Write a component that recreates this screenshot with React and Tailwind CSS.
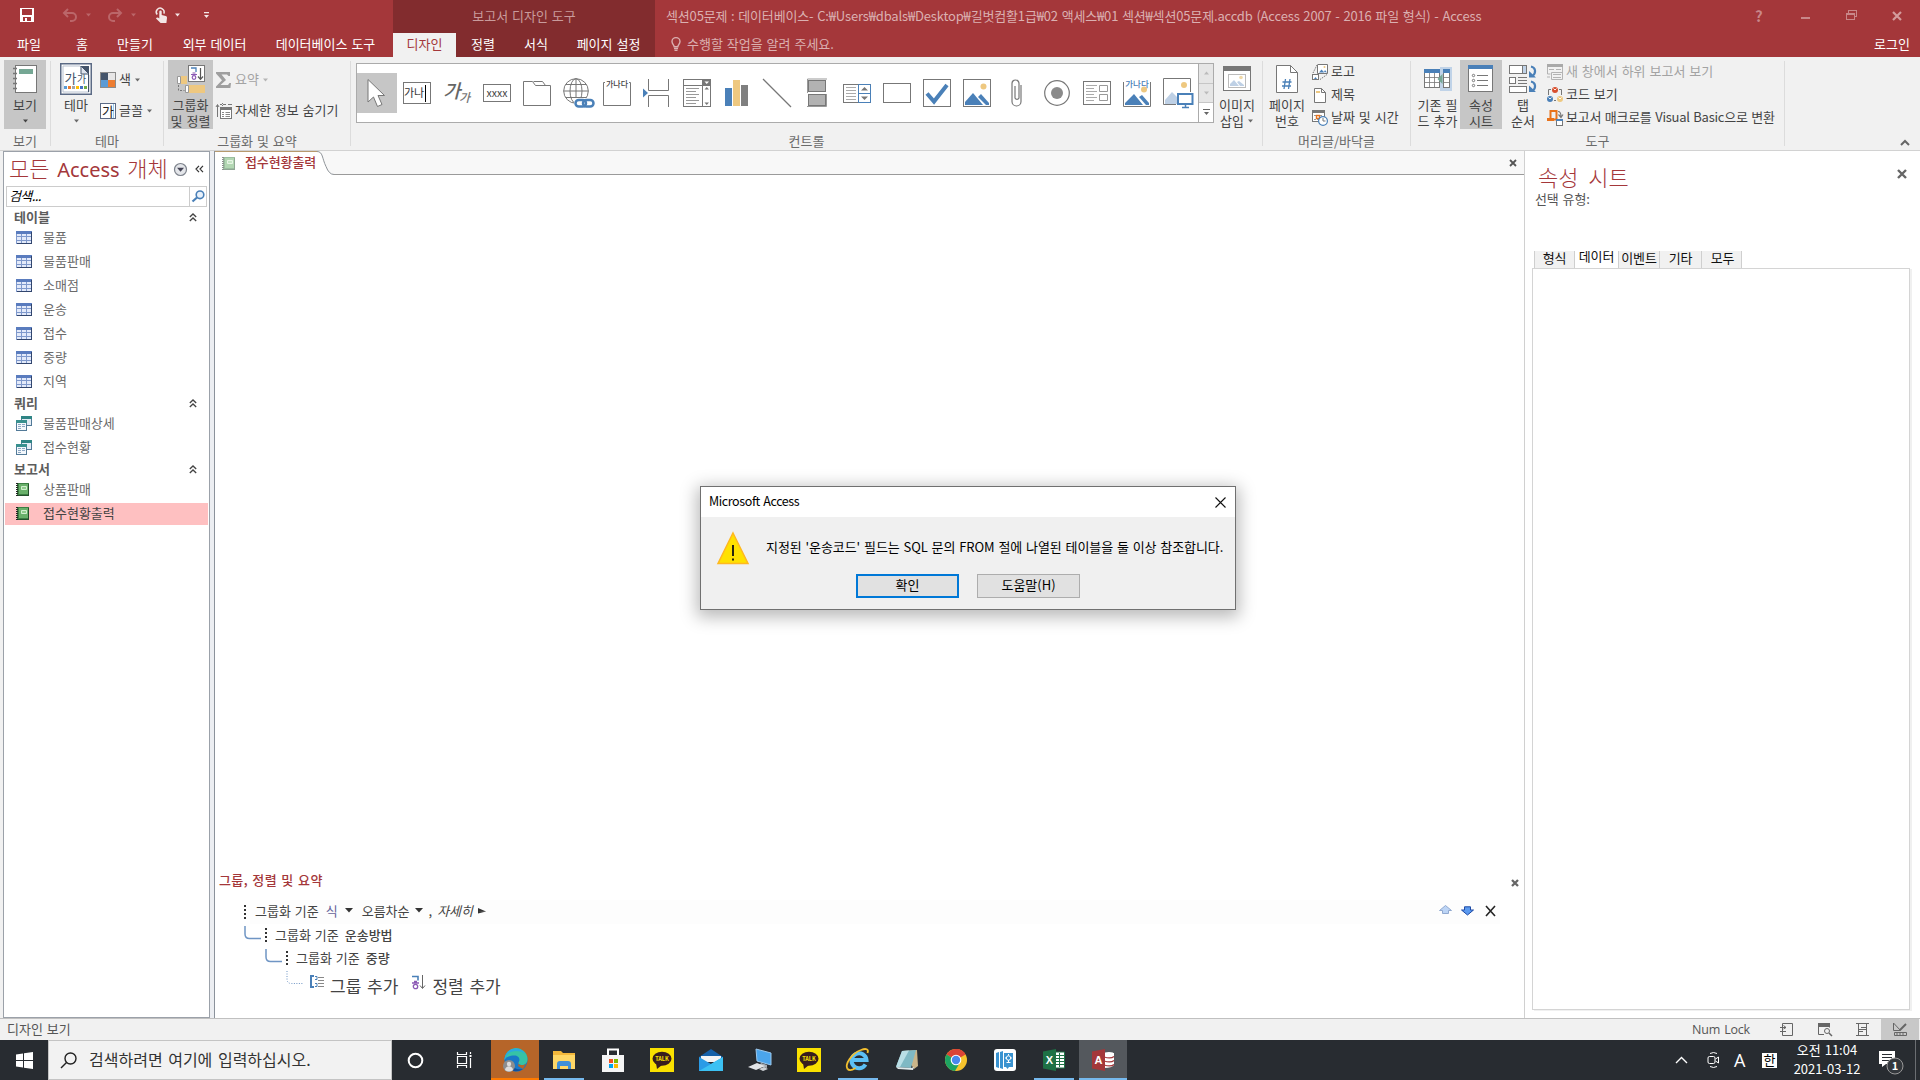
import React from "react";

const S = ({ w, h = w, children, className = "", crisp = false }) => (
  <svg width={w} height={h} viewBox={`0 0 ${w} ${h}`} fill="none" className={`block shrink-0 overflow-visible ${className}`} shapeRendering={crisp ? "crispEdges" : undefined}>
    {children}
  </svg>
);

const Caret = ({ c = "#6a6a6a", className = "" }) => (
  <S w={7} h={4} className={className}><path d="M1 0.5h5L3.5 3.5z" fill={c} /></S>
);

/* ---------- title bar ---------- */

const W = "#f3e6e6";
const DIM = "#bb6669";

function TitleBar() {
  return (
    <header className="flex h-[57px] bg-[#a4373a] text-white">
      <div className="w-[393px]">
        <div className="flex h-[33px] items-center pb-[3px] pl-[20px]">
          <S w={14} crisp><path d="M0 0h14v14H0z" fill="#fff" /><path d="M3 1h9v6H2V1z M3 9h8v4H3z" fill="#a4373a" /><path d="M5 10h2v3H5z" fill="#fff" /></S>
          <S w={16} h={14} className="ml-[28px]"><path d="M2 5h8a4 4 0 0 1 0 8H8M6 1L2 5l4 4" stroke={DIM} strokeWidth="2" /></S>
          <Caret c={DIM} className="ml-[7px]" />
          <S w={16} h={14} className="ml-[15px]"><path d="M14 5H6a4 4 0 0 0 0 8h2M10 1l4 4-4 4" stroke={DIM} strokeWidth="2" /></S>
          <Caret c={DIM} className="ml-[7px]" />
          <S w={13} h={17} className="ml-[18px]">
            <path d="M2.2 7.6A3.9 3.9 0 1 1 8.8 6.6" stroke={W} strokeWidth="1.5" />
            <path d="M4.3 4.6a1.2 1.2 0 0 1 2.4 0V8l4 1c1 .3 1.4 1 1.3 2L11.4 16H5.6L1 11.4c.6-1.2 2-1 3.3 0z" fill={W} />
          </S>
          <Caret c={W} className="ml-[6px]" />
          <S w={7} h={7} className="ml-[22px]"><path d="M1 0h5v1.2H1z M1 3h5L3.5 6z" fill={W} /></S>
        </div>
        <nav className="flex h-[24px] text-center text-[13px] leading-[21px]">
          <span className="w-[58px]">파일</span>
          <span className="w-[48px]">홈</span>
          <span className="w-[58px]">만들기</span>
          <span className="w-[101px]">외부 데이터</span>
          <span className="w-[121px]">데이터베이스 도구</span>
        </nav>
      </div>
      <div className="w-[262px] bg-[#822c2e]">
        <div className="h-[33px] text-center text-[13px] leading-[32px] text-[#c99b9c]">보고서 디자인 도구</div>
        <nav className="flex h-[24px] text-center text-[13px] leading-[21px]">
          <span className="w-[63px] bg-[#f1f1f1] text-[#a4373a]">디자인</span>
          <span className="w-[54px]">정렬</span>
          <span className="w-[52px]">서식</span>
          <span className="w-[93px]">페이지 설정</span>
        </nav>
      </div>
      <div className="flex-1 pl-[11px] text-[13px] text-[#dbb0b1]">
        <div className="flex h-[33px] justify-between leading-[32px]">
          <span className="whitespace-pre tracking-[-0.16px]">섹션05문제 : 데이터베이스- C:₩Users₩dbals₩Desktop₩길벗컴활1급₩02 액세스₩01 섹션₩섹션05문제.accdb (Access 2007 - 2016 파일 형식) - Access</span>
          <div className="flex items-center pb-[2px] pr-[18px] text-[#c98789]">
            <span className="w-[8px] text-[15px] font-bold">?</span>
            <S w={9} h={12} className="ml-[38px]" crisp><path d="M0 7h9v2H0z" fill="#c98789" /></S>
            <S w={11} h={11} className="ml-[36px]" crisp><path d="M.5 3.5h8v6h-8z M2.5 3V.5h8v6H9 M1 4.5h8" stroke="#c98789" /></S>
            <S w={10} className="ml-[35px]"><path d="M1 1l8 8M9 1L1 9" stroke="#d49c9d" strokeWidth="2.2" /></S>
          </div>
        </div>
        <div className="flex h-[24px] leading-[21px]">
          <S w={10} h={14} className="ml-[5px] mt-[4px]"><path d="M3.2 9.8C3 8 1 7 1 4.6a4 4 0 0 1 8 0C9 7 7 8 6.8 9.8z" stroke="#dbb0b1" strokeWidth="1.4" /><path d="M3 11.5h4M3.5 13.3h3" stroke="#dbb0b1" strokeWidth="1.3" /></S>
          <span className="ml-[6px]">수행할 작업을 알려 주세요.</span>
          <span className="ml-auto mr-[10px] text-white">로그인</span>
        </div>
      </div>
    </header>
  );
}

/* ---------- ribbon ---------- */

function Group({ className, caption, children }) {
  return (
    <div className={`flex shrink-0 ${className}`}>
      <div className="flex flex-1 flex-col">
        <div className="flex h-[72px] pt-[3px]">{children}</div>
        <div className="text-center leading-[23px] text-[#6a6a6a]">{caption}</div>
      </div>
      <div className="mt-[4px] h-[85px] w-px bg-[#dcdcdc]" />
    </div>
  );
}

function Big({ className, icon, l1, l2, on }) {
  return (
    <div className={`h-[69px] shrink-0 text-center leading-[16px] ${on ? "bg-[#c6c6c6]" : ""} ${className}`}>
      <div className="flex h-[37px] items-center justify-center">{icon}</div>
      <div className="whitespace-nowrap">{l1}</div>
      <div className="flex h-[16px] items-center justify-center whitespace-nowrap">{l2}</div>
    </div>
  );
}

function Small({ icon, children, className = "h-[23px]", off, caret }) {
  return (
    <div className={`flex items-center whitespace-nowrap ${off ? "text-[#a3a3a3]" : ""} ${className}`}>
      <div className="flex w-[19px] shrink-0">{icon}</div>
      <span className="pb-[2px]">{children}</span>
      {caret && <Caret c={off ? "#b5b5b5" : "#6a6a6a"} className="ml-[3px]" />}
    </div>
  );
}

const G = "#777";
const B = "#4a80b8";
const Y = "#eec880";

const ReportIcon = (
  <S w={24} h={28}>
    <rect x="2.5" y=".5" width="21" height="27" fill="#fff" stroke={G} />
    <path d="M6 4h14v5H6z" fill="#75a794" />
    <path d="M0 3.5h4M0 8.5h4M0 13.5h4M0 18.5h4M0 23.5h4" stroke={G} strokeWidth="1.5" />
  </S>
);

const ThemeIcon = (
  <S w={32}>
    <rect x=".75" y=".75" width="30.5" height="30.5" fill="#fff" stroke="#5b6a85" strokeWidth="1.5" />
    <path d="M3 3h17l9 9v17H3z" fill="#fff" stroke="#b9c2d0" />
    <path d="M28 11h1v18h-1z" fill="#44546a" />
    <path d="M21 3h8v8z" fill="#44546a" />
    <path d="M21 3l8 8h-8z" fill="#dfe5ee" stroke="#44546a" />
    <text x="4.5" y="20" fontSize="13" fill="#44546a">가</text>
    <text x="17" y="20" fontSize="10" fill="#44546a">가</text>
    <path d="M4 23h3v3H4z" fill="#5b9bd5" /><path d="M8 23h3v3H8z" fill="#ed7d31" /><path d="M12 23h3v3h-3z" fill="#a5a5a5" />
    <path d="M16 23h3v3h-3z" fill="#ffc000" /><path d="M20 23h3v3h-3z" fill="#4472c4" /><path d="M24 23h3v3h-3z" fill="#70ad47" />
  </S>
);

const ColorIcon = (
  <S w={16} crisp><path d="M0 0h16v16H0z" fill="#8b8b8b" /><path d="M1 1h7v7H1z" fill="#44546a" /><path d="M8 1h7v7H8z" fill="#e7e6e6" /><path d="M1 8h7v7H1z" fill="#5b9bd5" /><path d="M8 8h7v7H8z" fill="#ed7d31" /></S>
);

const FontIcon = (
  <S w={16}><rect x=".5" y=".5" width="15" height="15" fill="#fff" stroke="#5b6a85" /><path d="M13.5 1v14" stroke="#9cc6ea" /><text x="2" y="12.5" fontSize="13" fill="#222">가</text></S>
);

const SortIcon = (
  <S w={28}>
    <path d="M4 11h6v8H4zM11 20h17v8H11z" fill={Y} />
    <path d="M.5 11.5h3v7h-3zM8.5 20.5h3v7h-3z" fill="#fff" stroke="#999" />
    <path d="M1.5 20v5.5h6" stroke="#777" strokeDasharray="2 1.5" />
    <rect x="11.5" y=".5" width="16" height="16" fill="#fff" stroke={G} />
    <path d="M14 3h5v4" stroke={B} strokeWidth="1.3" />
    <path d="M14 9.5h6M15.5 8h3" stroke="#8c59b5" strokeWidth="1.2" /><circle cx="17" cy="12.5" r="1.8" stroke="#8c59b5" strokeWidth="1.2" />
    <path d="M23.5 3v11M21 11.5l2.5 2.8 2.5-2.8" stroke="#555" strokeWidth="1.2" />
  </S>
);

const SigmaIcon = <S w={16}><path d="M0 0h14v4h-1.5L11 2.5H5.5L10 8l-5.5 5H12l1.5-2H15l-.6 5H0v-1.500L6 8.300 0 1.500z" fill="#9f9f9f" /></S>;

const DetailIcon = (
  <S w={16}><path d="M1.5 2v12M0 4l1.5-2.5L3 4M4 1.5h2M7 1.5h3M12 1.5h4M7 0L5.5 1.5 7 3" stroke="#777" /><rect x="4.5" y="4.5" width="11" height="11" fill="#fff" stroke={G} /><path d="M4 4h12v3H4z" fill={G} /><path d="M6 9.5h2M9.5 9.5h4.5M6 11.5h2M9.5 11.5h4.5M6 13.5h2M9.5 13.5h4.5" stroke="#888" /></S>
);

const PicMini = ({ faded }) => (
  <g>
    <circle cx="20.5" cy="7.5" r="3" fill={faded ? "#f0d9a8" : Y} />
    <path d="M2 26v-3l8-9 10 12z" fill={faded ? "#bed0e5" : B} />
    <path d="M15 18l3-3 8 9v2h-3z" fill={faded ? "#bed0e5" : B} />
  </g>
);

const galleryIcons = [
  <S w={20} h={30}><path d="M1 1.5v22.5l5.5-5 4 9.5 4.5-2-4-9h6.5z" fill="#fff" stroke={G} strokeLinejoin="round" /></S>,
  <S w={28} h={22}><rect x=".5" y=".5" width="27" height="21" fill="#fff" stroke={G} /><text x="1" y="15" fontSize="11" fill="#333">가나</text><path d="M22.5 3v17" stroke="#000" /></S>,
  <S w={30} h={24}><text x="1" y="17" fontSize="19" fontStyle="italic" fontWeight="500" fill="#666">가</text><text x="17" y="21" fontSize="12" fontStyle="italic" fontWeight="500" fill="#777">가</text></S>,
  <S w={28} h={18}><rect x=".5" y=".5" width="27" height="17" fill="#fff" stroke={G} /><text x="14" y="12.5" textAnchor="middle" fontSize="10.5" fill="#444">xxxx</text></S>,
  <S w={28} h={26}><path d="M.5 1.5h9l3 4h15v20H.5zM10.5 1.5h9l3 4" fill="#fff" stroke={G} /></S>,
  <S w={32} h={30} className="ml-[4px]"><g stroke={G} fill="none"><circle cx="13" cy="13" r="12.3" /><ellipse cx="13" cy="13" rx="6" ry="12.3" /><path d="M.7 13h24.6M13 .7v24.6M2.5 6.5h21M2.5 19.5h21" /></g><path d="M11 20h21v10H11z" fill="#fff" /><rect x="12.5" y="22" width="10.5" height="6.5" rx="3.25" stroke={B} strokeWidth="2.5" /><rect x="20" y="22" width="10.5" height="6.5" rx="3.25" stroke={B} strokeWidth="2.5" /></S>,
  <S w={28} h={28}><path d="M2 3.5H.5v23h27v-23H26" stroke={G} /><text x="14" y="8" textAnchor="middle" fontSize="8" fontWeight="500" fill="#444">가나다</text></S>,
  <S w={26} h={28} className="mr-[2px]"><path d="M5.5 0v11.5h20V0M5.5 28V16.5h20V28" stroke={G} /><path d="M0 9.5l5 4.5-5 4.5z" fill={B} /></S>,
  <S w={28} h={28}><rect x=".5" y=".5" width="27" height="27" fill="#fff" stroke={G} /><path d="M0 6.5h28M19.5 0v28" stroke={G} /><path d="M20 1h7v5h-7z" fill={G} /><path d="M21.5 2.5h4.5L23.75 5z" fill="#fff" /><path d="M21.5 10.5h4.5L23.75 8zM21.5 23.5h4.5L23.75 26z" fill={G} /><path d="M3 9.5h13M3 12.5h10M3 15.5h13M3 18.5h10M3 21.5h13M3 24.5h10" stroke="#999" /></S>,
  <S w={24} h={26} crisp><path d="M0 8h7v18H0z" fill={B} /><path d="M8 0h7v26H8z" fill={Y} /><path d="M16 5h7v21h-7z" fill="#7f7f7f" /></S>,
  <S w={28} h={28}><path d="M0 0l28 28" stroke={G} strokeWidth="1.2" /></S>,
  <S w={20} h={28}><rect x="1.5" y="1.5" width="17" height="11" fill="#b2b2b2" stroke="#777" /><path d="M.5 14V0H20" stroke="#999" /><rect x="1.5" y="15.5" width="17" height="11" fill="#b2b2b2" stroke="#777" /><path d="M0 27.5h19.5V15" stroke="#999" /></S>,
  <S w={28} h={19}><rect x=".5" y=".5" width="27" height="18" fill="#fff" stroke={G} /><path d="M3 3.5h10M3 6.5h10M3 9.5h10M3 12.5h10M3 15.5h10" stroke="#aaa" /><path d="M15.5.5h12v18h-12zM15 9.5h13" stroke={B} /><path d="M18 6.5h7L21.5 3zM18 12.5h7L21.5 16z" fill={G} /></S>,
  <S w={28} h={20}><rect x=".5" y=".5" width="27" height="19" fill="#fff" stroke={G} /></S>,
  <S w={28} h={28}><rect x=".5" y=".5" width="27" height="27" fill="#fff" stroke={G} /><path d="M4 14.5l7 8L24 6" stroke={B} strokeWidth="4" /></S>,
  <S w={28} h={28}><rect x=".5" y=".5" width="27" height="27" fill="#fff" stroke={G} /><PicMini /></S>,
  <S w={12} h={28} className="mr-[1px]"><path d="M1 8v14.5a4.5 4.5 0 0 0 9 0V6M1 8V4.5a3.5 3.5 0 0 1 7 0V19a2.2 2.2 0 0 1-4 0V7" stroke={G} strokeWidth="1.2" /></S>,
  <S w={26} h={26}><circle cx="13" cy="13" r="12.3" fill="#fff" stroke={G} strokeWidth="1.2" /><circle cx="13" cy="13" r="6" fill="#8a8a8a" /></S>,
  <S w={28} h={24}><rect x=".5" y=".5" width="27" height="23" fill="#fff" stroke={G} /><path d="M3 4.5h11M3 7.5h8M3 10.5h11M3 13.5h8M3 16.5h11M3 19.5h8" stroke="#aaa" /><path d="M16.5 4.5h8v6h-8zM16.5 13.5h8v6h-8z" stroke="#999" /></S>,
  <S w={28} h={28}><path d="M.5 3v24.5h27V3" stroke={G} /><circle cx="21" cy="10.5" r="3" fill={Y} /><path d="M2 26v-2l9-9 9 11zM16 18l3-2 7 8v2h-3z" fill={B} /><text x="14" y="7.5" textAnchor="middle" fontSize="8.5" fontWeight="500" fill={B}>가나다</text></S>,
  <S w={31} h={30} className="ml-[3px]"><path d="M13 26.5H.5V.5h27V14" stroke={G} /><circle cx="21" cy="7" r="3" fill={Y} /><path d="M2 26v-4l7-8 6 6v6z" fill="#bed0e5" /><rect x="15" y="16" width="14.5" height="10" fill="#fff" stroke={B} strokeWidth="2" /><path d="M19 29.5h7M22.5 27v2" stroke={B} strokeWidth="1.5" /></S>,
];

const InsertPicIcon = (
  <S w={28} h={25}><rect x=".5" y=".5" width="27" height="24" fill="#fff" stroke={G} /><path d="M0 0h28v5H0z" fill={G} /><rect x="5.5" y="8.5" width="17" height="13" fill="#fff" stroke="#bbb" /><path d="M7 20v-2l4-4 5 6zM14 16l2-1 5 4v1h-4z" fill="#bed0e5" /><circle cx="18" cy="11.5" r="1.8" fill="#f0d9a8" /></S>
);
const PageNoIcon = (
  <S w={22} h={28}><path d="M.5.5h14l7 7v20H.5z" fill="#fff" stroke={G} /><path d="M14.5.5v7h7" stroke={G} /><path d="M8 24l1.5-10M12.500 24l1.500-10M6.500 17h9M6 21h9" stroke={B} strokeWidth="1.300" /></S>
);
const LogoIcon = (
  <S w={16}><path d="M5.5 1v8.5h10V.5h-10" fill="#fff" stroke={G} /><path d="M7 8.5l2.5-3 3 3zM12 8l1-2 2 2.5z" fill={B} /><circle cx="12.5" cy="3" r="1" fill={Y} /><rect x=".5" y="10.5" width="6" height="5" fill="#fff" stroke={G} /><path d="M2 15l1.5-2L5 15z" fill={B} /><path d="M1 9l4-8M8 15.5l7-5" stroke={G} strokeDasharray="1.5 1" /></S>
);
const TitleIcon = <S w={16}><path d="M2.5 1.5h7l4 4v10h-11z" fill="#fff" stroke={G} /><path d="M9.5 1.5v4h4" stroke={G} /><path d="M4 4h4v2H4z" fill={Y} /></S>;
const DateIcon = (
  <S w={16}><rect x=".5" y=".5" width="12" height="11" fill="#fff" stroke={G} /><path d="M0 0h13v3H0z" fill={G} /><path d="M2 5.5h9M2 9.5h6" stroke="#999" strokeDasharray="2 1" /><rect x="4.5" y="5.5" width="3" height="3" stroke="#e8731c" strokeWidth="1.4" /><circle cx="11" cy="11" r="4.4" fill="#fff" stroke={B} strokeWidth="1.2" /><path d="M11 8v3h2.5" stroke={G} /></S>
);
const AddFieldIcon = (
  <S w={28} h={24}><path d="M16 0h12v24H16z" fill="#c0d3e8" /><rect x=".5" y="2.5" width="15" height="18" fill="#fff" stroke={G} /><rect x="19.5" y="2.5" width="6" height="18" fill="#fff" stroke={G} /><path d="M0 2h16v4H0zM19 2h7v4h-7z" fill={B} /><path d="M0 10.5h16M0 15.5h16M5.5 6v15M10.5 6v15M19 10.5h7M19 15.5h7" stroke={G} strokeWidth=".8" /><path d="M18.5 7v10L13.5 12z" fill="#75a794" /></S>
);
const PropIcon = (
  <S w={26} h={28}><rect x=".5" y=".5" width="24" height="26" fill="#fff" stroke={G} /><path d="M0 0h25v4H0z" fill={B} /><path d="M9 10.5h11M9 15.5h11M9 20.5h11" stroke={G} /><g stroke={G}><circle cx="5.5" cy="10.5" r="1.2" /><circle cx="5.5" cy="15.5" r="1.2" /><circle cx="5.5" cy="20.5" r="1.2" /></g></S>
);
const TabOrderIcon = (
  <S w={28}><rect x=".5" y=".5" width="17" height="8" fill="#fff" stroke={G} /><path d="M14 1h3v7h-3z" fill="#c0d3e8" /><path d="M13.5 1v7" stroke={G} /><rect x=".5" y="12.5" width="6" height="6" fill="#fff" stroke={G} /><path d="M9 12.5h9M9 15.5h9M9 18.5h9" stroke={G} /><rect x=".5" y="21.5" width="17" height="6" fill="#fff" stroke={G} /><path d="M22 1.5c5 1 5 6.5 2 9M22 16.5c5 1 5 6.5 2 9" stroke={B} strokeWidth="2.2" /><path d="M20 6v6.5h7zM20 20.5V27h7z" fill={B} /></S>
);
const SubWinIcon = (
  <S w={16}><path d="M0 0h16v3H0z" fill="#a9a9a9" /><path d="M.5 3v7h3M15.5 3v12.5h-11v-7h11M2 5.5h5M9 5.5h5M6 10.5h8M6 13.5h8M0 13h3" stroke="#b3b3b3" /></S>
);
const CodeIcon = (
  <S w={16}><path d="M4 2.5H1.5V8M12 2.5h2.5V8M7 13.5h2" stroke={G} /><circle cx="8" cy="3" r="3" fill="#d8502f" /><circle cx="3" cy="12" r="3" fill={B} /><circle cx="13" cy="12" r="3" fill={Y} /><path d="M6.5 1.5L8 3l1.5-1.5M1.5 10.500L3 12l1.500-1.500M11.500 10.500L13 12l1.500-1.500" stroke="#fff" strokeWidth=".9" /></S>
);
const MacroIcon = (
  <S w={16}><path d="M3.5 9V1h7M9.5 1v8.5H1" stroke="#e8731c" strokeWidth="2" /><path d="M0 8h7v3H0z" fill="#e8731c" /><path d="M11 1.5c2.500 0 3 2 3 5M11.500 4.500L14 7.500 16 4.500" stroke={G} strokeWidth="1.200" /><rect x="9.500" y="9.500" width="6" height="6" fill="#fff" stroke={G} /><path d="M9 9h7v2H9z" fill={B} /></S>
);

function Ribbon() {
  return (
    <section className="flex h-[94px] border-b border-[#d2d2d2] bg-[#f1f1f1] text-[13px] text-[#444]">
      <Group className="w-[51px]" caption="보기">
        <Big className="ml-[4px] w-[42px]" on icon={ReportIcon} l1="보기" l2={<Caret c="#444" />} />
      </Group>
      <Group className="w-[113px]" caption="테마">
        <Big className="ml-[4px] w-[42px]" icon={ThemeIcon} l1="테마" l2={<Caret />} />
        <div className="ml-[3px] pt-[4px]">
          <Small className="h-[31px]" icon={ColorIcon} caret>색</Small>
          <Small className="h-[31px]" icon={FontIcon} caret>글꼴</Small>
        </div>
      </Group>
      <Group className="w-[187px]" caption="그룹화 및 요약">
        <Big className="ml-[4px] w-[45px]" on icon={SortIcon} l1="그룹화" l2="및 정렬" />
        <div className="ml-[3px] pt-[4px]">
          <Small className="h-[31px]" icon={SigmaIcon} off caret>요약</Small>
          <Small className="h-[31px]" icon={DetailIcon}>자세한 정보 숨기기</Small>
        </div>
      </Group>
      <Group className="w-[912px]" caption="컨트롤">
        <div className="ml-[5px] mt-[3px] flex h-[60px] w-[858px] border border-[#ababab] bg-white">
          <div className="flex flex-1 items-center">
            {galleryIcons.map((ic, i) => (
              <div key={i} className={`flex h-[40px] w-[40px] shrink-0 items-center justify-center ${i === 0 ? "bg-[#c6c6c6]" : ""}`}>{ic}</div>
            ))}
          </div>
          <div className="flex w-[15px] flex-col border-l border-[#ababab]">
            <div className="flex flex-1 items-center justify-center border-b border-[#c6c6c6] bg-[#e6e6e6]"><Caret c="#bbb" className="rotate-180" /></div>
            <div className="flex flex-1 items-center justify-center border-b border-[#c6c6c6] bg-[#e6e6e6]"><Caret c="#bbb" /></div>
            <div className="flex flex-1 items-center justify-center"><S w={7} h={7}><path d="M0 0h7v1H0zM1 3h5L3.5 6z" fill="#666" /></S></div>
          </div>
        </div>
        <Big className="ml-[2px] w-[42px]" icon={InsertPicIcon} l1="이미지" l2={<>삽입<Caret className="ml-[3px]" /></>} />
      </Group>
      <Group className="w-[148px]" caption="머리글/바닥글">
        <Big className="ml-[3px] w-[42px]" icon={PageNoIcon} l1="페이지" l2="번호" />
        <div className="ml-[4px]">
          <Small icon={LogoIcon}>로고</Small>
          <Small icon={TitleIcon}>제목</Small>
          <Small icon={DateIcon}>날짜 및 시간</Small>
        </div>
      </Group>
      <Group className="w-[374px]" caption="도구">
        <Big className="ml-[4px] w-[45px]" icon={AddFieldIcon} l1="기존 필" l2="드 추가" />
        <Big className="w-[42px]" on icon={PropIcon} l1="속성" l2="시트" />
        <Big className="w-[42px]" icon={TabOrderIcon} l1="탭" l2="순서" />
        <div className="ml-[3px]">
          <Small icon={SubWinIcon} off>새 창에서 하위 보고서 보기</Small>
          <Small icon={CodeIcon}>코드 보기</Small>
          <Small icon={MacroIcon}><span className="tracking-[-0.26px]">보고서 매크로를 Visual Basic으로 변환</span></Small>
        </div>
      </Group>
      <S w={10} h={7} className="ml-auto mr-[10px] mt-[82px]"><path d="M1 6l4-4 4 4" stroke="#666" strokeWidth="2" /></S>
    </section>
  );
}

/* ---------- navigation pane ---------- */

const TableIcon = (
  <S w={16} h={13} crisp><path d="M0 0h16v13H0z" fill="#7f99cc" /><path d="M0 0h16v3H0z" fill="#5a7cbe" /><path d="M1 3h4v2H1zM6 3h4v2H6zM11 3h4v2h-4zM1 6h4v3H1zM6 6h4v3H6zM11 6h4v3h-4zM1 10h4v2H1zM6 10h4v2H6zM11 10h4v2h-4z" fill="#e3eafa" /><path d="M15 1h1v12H1v-1h14z" fill="#32466e" /></S>
);
const QueryIcon = (
  <S w={16} h={15} crisp><path d="M5 0h11v10H5z" fill="#527a98" /><path d="M6 3h9v6H6z" fill="#e3ecf5" /><path d="M5 0h11v3H5z" fill="#2f8585" /><path d="M0 4h11v11H0z" fill="#527a98" /><path d="M1 7h9v7H1z" fill="#f4f8fc" /><path d="M0 4h11v3H0z" fill="#39908f" /><path d="M2 8h3v1H2zM6 8h3v1H6zM2 10h3v1H2zM6 10h3v1H6zM2 12h3v1H2z" fill="#8aa6c2" /></S>
);
const BookIcon = ({ faded }) => (
  <S w={13} h={13} className={faded ? "opacity-50" : ""}><path d="M1 0h12v13H1z" fill="#3c7f43" /><path d="M3 1h9v10H3z" fill="#69b06a" /><path d="M5.5 3.5h5v3h-5z" fill="#8fcb8c" stroke="#d2efcf" /><path d="M1 0v13" stroke="#222" strokeWidth="2" strokeDasharray="1 1" /><path d="M2 12.5h11M12.500 1v12" stroke="#24502c" /></S>
);
const UpUp = <S w={8} h={9}><path d="M.8 4L4 1l3.2 3M.8 8L4 5l3.2 3" stroke="#444" strokeWidth="1.3" /></S>;

function Section({ title, icon, items, selected }) {
  return (
    <>
      <div className="flex h-[18px] items-center justify-between pl-[9px] pr-[11px] pt-[2px] font-bold text-[#5c5c5c]">
        <span className="text-[13px] leading-[16px]">{title}</span>{UpUp}
      </div>
      {items.map((t) => (
        <div key={t} className="h-[24px] pt-[2px]">
          <div className={`flex h-[22px] items-center pl-[11px] ${t === selected ? "bg-[#fec0c1] text-[#444]" : "text-[#6a6a6a]"}`}>
            <div className="w-[27px] pb-[2px]">{icon}</div>
            <span className="pb-[2px]">{t}</span>
          </div>
        </div>
      ))}
    </>
  );
}

function NavPane() {
  return (
    <aside className="flex w-[215px] shrink-0 bg-[#f1f1f1] pl-[3px]">
      <div className="w-[207px] border border-[#9ba1a9] bg-white px-px text-[13px]">
        <div className="flex h-[34px] items-center pl-[4px] text-[#a4373a]">
          <span className="whitespace-nowrap font-[Noto_Sans,Noto_Sans_CJK_KR] text-[22px] font-light leading-[34px] [word-spacing:2px]">모든 <span className="text-[20px] font-normal">Access</span> 개체</span>
          <S w={13} className="ml-auto"><circle cx="6.5" cy="6.5" r="6" fill="#e4e6ea" stroke="#7d838c" strokeWidth="1.2" /><path d="M3 4.800h7L6.500 8.800z" fill="#445" /></S>
          <S w={9} h={8} className="ml-[8px] mr-[4px]"><path d="M4 .8L1 4l3 3.2M8 .8L5 4l3 3.200" stroke="#333" strokeWidth="1.200" /></S>
        </div>
        <div className="ml-px mr-px flex h-[21px] border border-[#ccc]">
          <span className="flex-1 pl-[2px] italic leading-[17px] tracking-[-0.6px] text-black">검색...</span>
          <div className="flex w-[17px] items-center justify-center border-l border-[#ccc]">
            <S w={14} h={13}><circle cx="9" cy="4.8" r="3.8" fill="#e8f1fb" stroke="#4a80b8" strokeWidth="1.6" /><path d="M6 7.5L1.5 11.5" stroke="#4a80b8" strokeWidth="2.2" /></S>
          </div>
        </div>
        <Section title="테이블" icon={TableIcon} items={["물품", "물품판매", "소매점", "운송", "접수", "중량", "지역"]} />
        <Section title="쿼리" icon={QueryIcon} items={["물품판매상세", "접수현황"]} />
        <Section title="보고서" icon={<BookIcon />} items={["상품판매", "접수현황출력"]} selected="접수현황출력" />
      </div>
      <div className="w-[5px] border-r border-[#8b929b] bg-[#eceef2]" />
    </aside>
  );
}

/* ---------- document area ---------- */

const Dots = () => <S w={2} h={14} crisp><path d="M0 0h2v2H0zM0 4h2v2H0zM0 8h2v2H0zM0 12h2v2H0z" fill="#333" /></S>;
const Link = ({ dotted }) => (
  <S w={18} h={14}><path d="M1 0v8q0 4.5 4.5 4.5H17" stroke="#6f95c4" strokeWidth={dotted ? 1 : 1.5} strokeDasharray={dotted ? "1 1.5" : undefined} /></S>
);
const XMark = ({ w = 8, c = "#555", s = 2 }) => <S w={w}><path d={`M1 1L${w - 1} ${w - 1}M${w - 1} 1L1 ${w - 1}`} stroke={c} strokeWidth={s} /></S>;
const Drop = ({ className = "" }) => <S w={8} h={5} className={className}><path d="M0 0h8L4 4.5z" fill="#333" /></S>;

function Document() {
  return (
    <main className="flex w-[1309px] shrink-0 flex-col bg-white text-[13px]">
      <div className="flex h-[24px] bg-[#f8f8f8]">
        <div className="flex h-[24px] w-[102px] items-center border-t border-[#b79a6e] bg-white pb-px pl-[7px] text-[#a4373a]">
          <BookIcon faded />
          <span className="ml-[10px] whitespace-nowrap pb-[2px] font-medium tracking-[-0.1px]">접수현황출력</span>
        </div>
        <S w={17} h={24}><path d="M0 0c6 0 5 8 9 16q3 8 7 8H0z" fill="#fff" /><path d="M0 .5c6 0 5 7 9 15q3 8 8 8" stroke="#8f9499" /></S>
        <div className="flex flex-1 items-center justify-end border-b border-[#9a9a9a] pr-[7px]"><XMark w={8} s={1.8} /></div>
      </div>
      <div className="h-[696px]" />
      <div className="flex h-[24px] items-start justify-between pl-[4px] pr-[5px]">
        <span className="font-medium leading-[18px] tracking-[0.4px] text-[#a4373a]">그룹, 정렬 및 요약</span>
        <div className="mt-[8px]"><XMark w={8} c="#666" s={2.3} /></div>
      </div>
      <div className="mt-[4px] flex h-[25px] items-center pl-[29px] text-[#444]">
        <Dots />
        <div className="ml-[4px] flex h-[24px] w-[1250px] items-center bg-[#fdfdfd] pb-[2px] pl-[5px]">
          <span>그룹화 기준</span><span className="ml-[7px] text-[#66629a]">식</span>
          <Drop className="ml-[7px]" />
          <span className="ml-[9px]">오름차순</span>
          <Drop className="ml-[5px]" />
          <span className="ml-[6px]">,</span>
          <span className="ml-[5px] italic">자세히</span>
          <S w={8} h={6} className="ml-[5px]"><path d="M0 0l8 3.5H0z" fill="#333" /><path d="M0 3l8 .5L0 5.500z" fill="#333" /></S>
          <div className="ml-auto mr-[4px] flex items-center">
            <S w={13} h={9} className="mb-[3px]"><path d="M6.5.5l6 5h-3v3h-6v-3h-3z" fill="#bcd4f5" stroke="#91a9d0" /></S>
            <S w={13} h={10} className="ml-[9px]"><path d="M6.5 9l6-5h-3V.8h-6V4h-3z" fill="#5b9af0" stroke="#1f4aa5" /></S>
            <S w={11} h={12} className="ml-[11px]"><path d="M1 1l9 10M10 1L1 11" stroke="#222" strokeWidth="1.6" /></S>
          </div>
        </div>
      </div>
      <div className="flex h-[23px] items-center pb-[2px] pl-[29px] text-[#444]">
        <div className="mb-[4px]"><Link /></div><div className="ml-[3px]"><Dots /></div>
        <span className="ml-[8px]">그룹화 기준</span><span className="ml-[6px] font-medium">운송방법</span>
      </div>
      <div className="flex h-[23px] items-center pb-[2px] pl-[50px] text-[#444]">
        <div className="mb-[4px]"><Link /></div><div className="ml-[3px]"><Dots /></div>
        <span className="ml-[8px]">그룹화 기준</span><span className="ml-[6px] font-medium">중량</span>
      </div>
      <div className="flex h-[30px] items-center pl-[71px] pt-px text-[17px] text-[#444]">
        <div className="mb-[16px]"><Link dotted /></div>
        <S w={15} h={13} className="mb-[8px] ml-[6px]"><path d="M4 1H1v11h3" stroke={B} strokeWidth="2" /><path d="M5 1.5h2v3H5M5 8.5h2v3H5" stroke={B} /><path d="M8 2.5h6M8 5.5h6M8 8.5h6M8 11.5h6" stroke="#888" /></S>
        <span className="ml-[5px] [word-spacing:2px]">그룹 추가</span>
        <S w={15} h={15} className="mb-[6px] ml-[13px]"><path d="M1 1.5h6v4" stroke={B} strokeWidth="1.6" /><path d="M1 8h7M3 6.5h3" stroke="#8c59b5" strokeWidth="1.3" /><circle cx="4.5" cy="11.5" r="2.2" stroke="#8c59b5" strokeWidth="1.3" /><path d="M11.5 0v13M9 10.5l2.5 3 2.5-3" stroke="#666" /></S>
        <span className="ml-[6px] [word-spacing:2px]">정렬 추가</span>
      </div>
    </main>
  );
}

function PropertySheet() {
  const tab = "border-r border-[#cfcfcf] bg-[#f1f1f1]";
  return (
    <aside className="flex flex-1 flex-col border-l border-[#d0d0d0] bg-white">
      <div className="flex h-[38px] items-start justify-between pl-[13px] pr-[13px] pt-[9px]">
        <span className="text-[22px] font-light leading-[32px] text-[#a4373a] [word-spacing:5px]">속성 시트</span>
        <div className="mt-[9px]"><XMark w={10} c="#666" s={2.4} /></div>
      </div>
      <div className="h-[62px] pl-[10px] text-[13px] leading-[20px] tracking-[-0.1px] text-[#555]">선택 유형:</div>
      <div className="ml-[9px] flex h-[17px] overflow-hidden text-center text-[13px] leading-[13px] tracking-[-0.2px] text-[#111]">
        <span className={`w-[41px] border-l ${tab}`}>형식</span>
        <span className="w-[44px] border-r border-[#cfcfcf] leading-[9px]">데이터</span>
        <span className={`w-[41px] ${tab}`}>이벤트</span>
        <span className={`w-[42px] ${tab}`}>기타</span>
        <span className={`w-[40px] pl-[2px] ${tab}`}>모두</span>
      </div>
      <div className="ml-[7px] h-[742px] w-[378px] border border-[#d4d4d4] shadow-[2px_1px_0_#f0f0f0]" />
    </aside>
  );
}

/* ---------- dialog ---------- */

function Dialog() {
  return (
    <div className="absolute left-[700px] top-[486px] h-[124px] w-[536px] border border-[#707070] bg-[#f0f0f0] text-[13px] text-black shadow-[0_4px_16px_3px_rgba(0,0,0,0.28)]">
      <div className="flex h-[30px] items-center justify-between bg-white pl-[8px] pr-[9px] text-[12.5px] tracking-[-0.4px]">
        <span className="pb-[2px]">Microsoft Access</span>
        <S w={11}><path d="M.5.5l10 10M10.5.5l-10 10" stroke="#111" strokeWidth="1.1" /></S>
      </div>
      <div className="flex h-[57px] pl-[16px] pt-[15px]">
        <S w={32} h={33}><path d="M16 1L31 31.5H1z" fill="#ffe100" stroke="#ffb820" strokeWidth="1.5" /><path d="M16 13v11M16 26.5v2" stroke="#111" strokeWidth="1.8" /></S>
        <span className="ml-[17px] mt-[4px] whitespace-nowrap leading-[22px] tracking-[-0.07px]">지정된 '운송코드' 필드는 SQL 문의 FROM 절에 나열된 테이블을 둘 이상 참조합니다.</span>
      </div>
      <div className="flex pl-[155px]">
        <button className="h-[24px] w-[103px] border-2 border-[#0078d7] bg-[#e1e1e1] pb-[2px] leading-[16px]">확인</button>
        <button className="ml-[18px] h-[24px] w-[103px] border border-[#adadad] bg-[#e1e1e1] pb-[2px] leading-[18px]">도움말(H)</button>
      </div>
    </div>
  );
}

/* ---------- status bar ---------- */

function StatusBar() {
  const g = "#666";
  return (
    <div className="flex h-[22px] items-center border-t border-[#c0c0c0] bg-[#f1f1f1] pl-[7px] text-[13px] text-[#555]">
      <span className="pb-[2px]">디자인 보기</span>
      <span className="ml-auto mr-[30px] pt-px font-[Open_Sans] text-[12.5px] tracking-[-0.2px]">Num Lock</span>
      <S w={13}><path d="M2.5.5h10v12h-10zM0 4.5h6M0 8.5h6M3.5 2.5L6 4.5 3.5 6" stroke={g} /></S>
      <S w={14} h={13} className="ml-[25px]"><path d="M.5.5h11v4M.5.5v11H6" stroke={g} /><path d="M0 0h12v4H0z" fill={g} /><circle cx="9" cy="8" r="2.5" stroke={g} /><path d="M11 10l3 3" stroke={g} strokeWidth="1.5" /></S>
      <S w={13} className="ml-[24px]"><path d="M2.5 0v13M10.5 0v13M0 .5h13M0 12.5h13M5 4.5h5M3 8.5h4M3 6.5h7" stroke={g} /></S>
      <div className="ml-[12px] mr-px flex h-[21px] w-[38px] items-center justify-center bg-[#c8c8c8]">
        <S w={15} h={13}><path d="M.5 0v7.5h7zM1.5 12.5v-3h12v3zM4 10v2M7 10v2M10 10v2" stroke={g} /><path d="M7 7l6-6" stroke={g} strokeWidth="2" /></S>
      </div>
    </div>
  );
}

/* ---------- taskbar ---------- */

const Kakao = <S w={24}><path d="M0 0h24v24H0z" fill="#fae100" /><ellipse cx="12" cy="10.8" rx="9.5" ry="7" fill="#371d1e" /><path d="M6 15l1 6 5-4z" fill="#371d1e" /><text x="12" y="13" textAnchor="middle" fontSize="5.5" fontWeight="700" fill="#fae100">TALK</text></S>;

const Edge = (
  <S w={26}>
    <circle cx="14" cy="13" r="11.5" fill="#1878c8" />
    <path d="M2.5 13A11.5 11.5 0 0 1 25.5 12c0 5-3.5 6.5-6.5 6-3-.5-3-2-2-3.5 1.5-3-1-6-4.5-6-5 0-9 2-10 4.5z" fill="#36c2a6" />
    <path d="M2.5 13A11.5 11.5 0 0 1 14 1.5c4 0 7 2 9 5-6-4-15-3-18 1.500z" fill="#2aa9e0" />
    <path d="M17 14.500c-1 1.500-1 3 2 3.500 2 .3 4-.2 5.300-1.800L21 22l-5-3z" fill="#b66529" />
    <path d="M9 14c0 6 5 9.500 12 8-5 3.500-12 3-15-2z" fill="#0f4f9e" />
    <circle cx="7" cy="19" r="6" fill="#8d8d8d" /><circle cx="7" cy="17" r="2.200" fill="#ddd" /><path d="M3 23c.5-5 7.500-5 8 0a6 6 0 0 1-8 0z" fill="#ddd" />
  </S>
);
const Explorer = <S w={24} h={20}><path d="M1 1h8l2 2h12v16H1z" fill="#f4b83b" /><path d="M1 5h22v14H1z" fill="#ffd766" /><path d="M5 19v-5q0-3 3-3h8q3 0 3 3v5h-3v-3H8v3z" fill="#3f8fd8" /></S>;
const Store = <S w={24} h={25}><path d="M7 8V1.5h10V8" stroke="#fff" strokeWidth="2" /><path d="M1 7h22v17H1z" fill="#f5f5f5" /><path d="M8 11h4v4H8z" fill="#f25022" /><path d="M13 11h4v4h-4z" fill="#7fba00" /><path d="M8 16h4v4H8z" fill="#00a4ef" /><path d="M13 16h4v4h-4z" fill="#ffb900" /></S>;
const Mail = <S w={24} h={22}><path d="M0 8l12-8 12 8v4H0z" fill="#1560a8" /><path d="M2 7h20v6H2z" fill="#f4f4f4" /><path d="M0 8l12 7 12-7v14H0z" fill="#2b9be6" /><path d="M0 22L24 8v14z" fill="#3cc1f3" /></S>;
const PC = <S w={24} h={22}><path d="M8 0l15 4v12L9 12z" fill="#4ba5ec" stroke="#9cc9ee" /><path d="M13 14l6 2v3l-8-2z" fill="#a8adb3" /><path d="M0 18l9-4 8 3-9 4z" fill="#e2e5e8" /><path d="M11 20l5-2 4 2-5 2z" fill="#ccd0d4" /></S>;
const IE = <S w={24}><path d="M19.5 16.5A7.500 7.500 0 1 1 20.500 12H7" stroke="#5cc0f5" strokeWidth="4" /><path d="M1.500 21C-1.500 16 6 5 15 2c5-2 8-1 6.500 3" stroke="#f4c02f" strokeWidth="1.800" /><path d="M1.500 21c2 2 5 1 8-1" stroke="#f4c02f" strokeWidth="1.800" /></S>;
const Note = <S w={24} h={22}><path d="M7 2l15-1 1 16-4 3z" fill="#c9b58a" /><path d="M7 2l14-1-5 18-15-1z" fill="#7fb9c4" /><path d="M7 2l7-.5L5 18l-4-.2z" fill="#b9dfe6" /><path d="M1 18l15 1 3-1-1 3-15-1z" fill="#dfe9eb" /></S>;
const Chrome = <S w={24}><circle cx="12" cy="12" r="11" fill="#f6c32c" /><path d="M12 12L2.5 6.5A11 11 0 0 1 21.5 6.5z" fill="#db4437" /><path d="M12 1a11 11 0 0 1 9.5 5.5H12z" fill="#db4437" /><path d="M2.5 6.5A11 11 0 0 0 11 23l5-8.5-4-2.5z" fill="#1da462" /><circle cx="12" cy="12" r="5.3" fill="#fff" /><circle cx="12" cy="12" r="4.2" fill="#4a88ee" /></S>;
const Blue = <S w={22}><rect width="22" height="22" rx="3" fill="#fff" /><path d="M2 4l3-1v16l-3-1zM6 3l3-1v18l-3-1zM10 4h9v14h-4l-1.5 2-1.5-2h-2z" fill="#3a93d0" /><circle cx="14.5" cy="9" r="2.2" stroke="#fff" /><path d="M14.5 5v1.5M14.5 11v3M12.5 13.5h4M11 9h1M17 9h1" stroke="#fff" /></S>;
const Excel = <S w={22}><path d="M12 3h9.5v16H12z" fill="#fff" stroke="#1e7145" /><path d="M12 6.5h9M12 9.5h9M12 12.5h9M12 15.5h9M16.5 4v14" stroke="#1e7145" /><path d="M0 2.5L13 0v22L0 19.5z" fill="#1e7145" /><text x="6.5" y="15" textAnchor="middle" fontSize="11" fontWeight="700" fill="#fff" fontFamily="Liberation Sans">X</text></S>;
const AccessI = <S w={22}><ellipse cx="17" cy="5" rx="5" ry="2" fill="#fff" /><path d="M12 4h10v12q-2 3-10 3z" fill="#fff" /><path d="M12 8q7 2 10-.5M12 12q7 2 10-.5M12 16q7 2 10-.5" stroke="#a4373a" strokeWidth="1.2" /><path d="M0 2.5L13 0v22L0 19.5z" fill="#a4373a" /><text x="6.5" y="15" textAnchor="middle" fontSize="11" fontWeight="700" fill="#fff" fontFamily="Liberation Sans">A</text></S>;

const apps = [
  { i: Edge, c: "bg-[#b66529]", u: "w-full bg-[#ff7a00]" },
  { i: Explorer, u: "w-[40px] bg-[#76b9ed]" },
  { i: Store }, { i: Kakao }, { i: Mail }, { i: PC }, { i: Kakao },
  { i: IE, u: "w-[40px] bg-[#76b9ed]" },
  { i: Note }, { i: Chrome }, { i: Blue },
  { i: Excel, u: "w-[40px] bg-[#76b9ed]" },
  { i: AccessI, c: "bg-[#54585d]", u: "w-full bg-[#76b9ed]" },
];

function Taskbar() {
  return (
    <footer className="flex h-[40px] items-center bg-[#282c31] text-white">
      <div className="flex w-[48px] justify-center">
        <S w={17}><path d="M0 2.5l7-1V8H0zM8 1.3L17 0v8H8zM0 9h7v6.5l-7-1zM8 9h9v8l-9-1.3z" fill="#fff" /></S>
      </div>
      <div className="flex h-[40px] w-[344px] items-center border border-[#c4c4c4] bg-[#f2f2f2] pl-[11px] text-[#333]">
        <S w={17}><circle cx="10.5" cy="6.5" r="5.5" stroke="#222" strokeWidth="1.4" /><path d="M6.5 10.5L1 16" stroke="#222" strokeWidth="1.4" /></S>
        <span className="ml-[12px] whitespace-nowrap pb-[2px] text-[16px] [word-spacing:2px]">검색하려면 여기에 입력하십시오.</span>
      </div>
      <S w={17} className="ml-[15px]"><circle cx="8.500" cy="8.500" r="6.800" stroke="#fff" strokeWidth="2" /></S>
      <S w={17} h={16} className="ml-[32px] mr-[17px]"><path d="M1.5 4.5h9v7h-9zM1.5 0v2.5h9V0M1.5 16v-2.5h9V16M14.5 0v2M14.5 6v10" stroke="#fff" strokeWidth="1.2" /><path d="M13.5 3h2v2h-2z" fill="#fff" /></S>
      <div className="flex">
        {apps.map((a, k) => (
          <div key={k} className="flex w-[49px] justify-center">
            <div className={`flex h-[40px] w-[48px] flex-col items-center ${a.c || ""}`}>
              <div className="flex h-[38px] items-center pt-[2px]">{a.i}</div>
              <div className={`h-[2px] ${a.u || ""}`} />
            </div>
          </div>
        ))}
      </div>
      <div className="ml-auto flex h-[40px] items-center">
        <S w={13} h={8}><path d="M1 7l5.5-5.5L12 7" stroke="#fff" strokeWidth="1.4" /></S>
        <S w={13} h={16} className="ml-[19px]"><rect x="1" y="4.5" width="7" height="7" rx="1.5" stroke="#fff" /><path d="M8.5 7L11.5 5v6l-3-2M3 1.5q3.500-2 7 0M3 14.500q3.500 2 7 0" stroke="#fff" /></S>
        <span className="ml-[14px] w-[14px] font-[Open_Sans] text-[18px] leading-[20px]">A</span>
        <span className="ml-[14px] flex h-[15px] w-[15px] items-center justify-center bg-white pb-px text-[13px] leading-[13px] text-black">한</span>
        <div className="ml-[16px] w-[68px] whitespace-nowrap pb-[2px] text-center text-[13px] leading-[19px]">
          <div>오전 11:04</div>
          <div>2021-03-12</div>
        </div>
        <S w={26} h={26} className="ml-[18px] mt-[6px]"><path d="M0 1h16v13H7l-4 3v-3H0z" fill="#fff" /><path d="M3 4.5h10M3 7.5h10M3 10.5h7" stroke="#282c31" /><circle cx="16" cy="16" r="8" fill="#33373c" stroke="#999" /><text x="16" y="20" textAnchor="middle" fontSize="11" fontWeight="700" fill="#fff">1</text></S>
        <div className="ml-[10px] mr-[4px] h-[40px] w-px bg-[#6b6e72]" />
      </div>
    </footer>
  );
}

export default function App() {
  return (
    <div className="relative flex h-[1080px] w-[1920px] flex-col overflow-hidden bg-white font-[Noto_Sans_CJK_KR,sans-serif] [word-spacing:1px]">
      <TitleBar />
      <Ribbon />
      <div className="flex h-[867px]">
        <NavPane />
        <Document />
        <PropertySheet />
      </div>
      <StatusBar />
      <Taskbar />
      <Dialog />
    </div>
  );
}
